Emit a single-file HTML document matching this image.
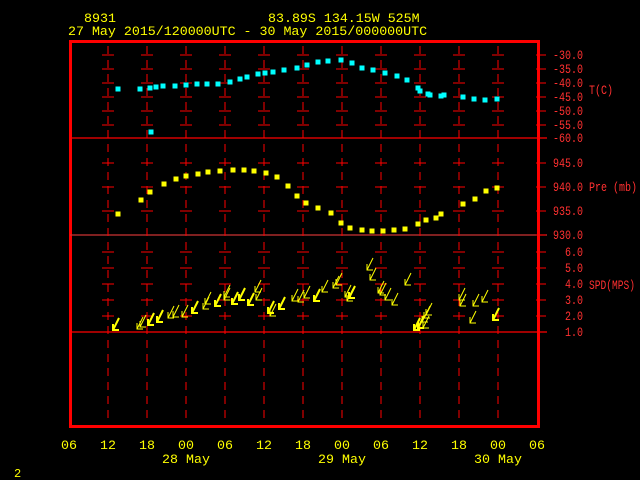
<!DOCTYPE html>
<html><head><meta charset="utf-8"><style>
html,body{margin:0;padding:0;background:#000;width:640px;height:480px;overflow:hidden}
svg{display:block}
text{font-family:"Liberation Mono","DejaVu Sans Mono",monospace;font-size:13.3px}
.s{font-size:12.5px}
</style></head><body>
<svg width="640" height="480" viewBox="0 0 640 480">
<g fill="#ffff00">
<text x="84" y="22">8931</text>
<text x="268" y="22">83.89S  134.15W   525M</text>
<text x="68" y="35">27 May 2015/120000UTC - 30 May 2015/000000UTC</text>
</g>
<rect x="70.5" y="41.5" width="468" height="385" fill="none" stroke="#ff0000" stroke-width="3"/>
<g stroke="#ff0000" stroke-width="1.2">
<line x1="70" y1="138" x2="547" y2="138"/>
<line x1="70" y1="235" x2="547" y2="235" stroke="#c33" />
<line x1="70" y1="332" x2="547" y2="332"/>
</g>
<g id="grid" stroke="#ff0000" stroke-width="1" stroke-dasharray="8,6"></g>
<g id="ticks" stroke="#ff0000" stroke-width="1"></g>
<g fill="#ff3030" text-anchor="end" id="lab"></g>
<g fill="#ff3030">
<text class="s" x="589" y="94" textLength="24" lengthAdjust="spacingAndGlyphs">T(C)</text>
<text class="s" x="589" y="191" textLength="48" lengthAdjust="spacingAndGlyphs">Pre (mb)</text>
<text class="s" x="589" y="289" textLength="46" lengthAdjust="spacingAndGlyphs">SPD(MPS)</text>
</g>
<g fill="#ffff00" text-anchor="middle" id="xl">
<text x="186" y="463">28 May</text>
<text x="342" y="463">29 May</text>
<text x="498" y="463">30 May</text>
</g>
<text x="14" y="477" fill="#ffff00" style="font-size:12px">2</text>
<g id="cy" fill="#00ffff"></g>
<g id="ye" fill="#ffff00"></g>
<g id="wd" stroke="#ffff00" stroke-width="1" fill="none"></g>
</svg>
<script>
var NS="http://www.w3.org/2000/svg";
function el(p,t,a,tx){var e=document.createElementNS(NS,t);for(var k in a)e.setAttribute(k,a[k]);if(tx)e.textContent=tx;document.getElementById(p).appendChild(e);}
var gx=[108,147,186,225,264,303,342,381,420,459,498];
var ty=[55,69,83,97,111,125,163,187,211,252,268,284,300,316];
gx.forEach(function(x){el('grid','line',{x1:x,y1:46,x2:x,y2:420});ty.forEach(function(y){el('ticks','line',{x1:x-6,y1:y,x2:x+6,y2:y});});});
var labs=[[55,"-30.0"],[69,"-35.0"],[83,"-40.0"],[97,"-45.0"],[111,"-50.0"],[125,"-55.0"],[138,"-60.0"],[163,"945.0"],[187,"940.0"],[211,"935.0"],[235,"930.0"],[252,"6.0"],[268,"5.0"],[284,"4.0"],[300,"3.0"],[316,"2.0"],[332,"1.0"]];
labs.forEach(function(l){el('lab','text',{x:583,y:l[0]+4,'class':'s',textLength:l[1].length*6,lengthAdjust:'spacingAndGlyphs'},l[1]);el('ticks','line',{x1:536,y1:l[0],x2:546,y2:l[0]});});
var xl=["06","12","18","00","06","12","18","00","06","12","18","00","06"];
xl.forEach(function(t,i){el('xl','text',{x:69+i*39,y:449},t);});
var c=[[118,89],[140,89],[150,88],[156,87],[163,86],[175,86],[186,85],[197,84],[207,84],[218,84],[230,82],[240,79],[247,77],[258,74],[265,73],[273,72],[284,70],[297,68],[307,65],[318,62],[328,61],[341,60],[352,63],[362,68],[373,70],[385,73],[397,76],[407,80],[418,88],[420,91],[428,94],[430,95],[441,96],[444,95],[463,97],[474,99],[485,100],[497,99],[151,132]];
c.forEach(function(p){el('cy','rect',{x:p[0]-2.5,y:p[1]-2.5,width:5,height:5});});
var y=[[118,214],[141,200],[150,192],[164,184],[176,179],[186,176],[198,174],[208,172],[220,171],[233,170],[244,170],[254,171],[266,173],[277,177],[288,186],[297,196],[306,203],[318,208],[331,213],[341,223],[350,228],[362,230],[372,231],[383,231],[394,230],[405,229],[418,224],[426,220],[436,218],[441,214],[463,204],[475,199],[486,191],[497,188]];
y.forEach(function(p){el('ye','rect',{x:p[0]-2.5,y:p[1]-2.5,width:5,height:5});});
var w=[[113,330,2],[137,329,1],[140,327,1],[148,325,2],[157,322,2],[168,318,1],[173,317,1],[182,317,1],[192,313,2],[203,309,1],[205,304,1],[215,306,2],[224,300,1],[224,297,1],[232,304,2],[239,300,2],[248,305,2],[255,292,1],[256,300,1],[268,313,2],[270,316,1],[279,309,2],[292,301,1],[298,302,1],[304,298,1],[314,301,2],[322,292,1],[333,288,1],[336,285,1],[345,297,1],[347,301,1],[349,298,2],[367,270,1],[370,280,1],[378,293,1],[380,295,1],[385,300,1],[392,305,1],[405,285,1],[414,330,2],[418,328,2],[422,322,1],[424,318,1],[426,315,1],[423,328,1],[459,300,1],[460,306,1],[470,323,1],[473,306,1],[482,302,1],[493,320,2]];
w.forEach(function(a){var x=a[0],yy=a[1],s=a[2];
el('wd','path',{d:'M'+(x+6)+' '+(yy-12)+'L'+x+' '+yy+'M'+x+' '+(yy-6)+'L'+x+' '+yy+'L'+(x+6)+' '+yy,'stroke-width':s});});
</script>
</body></html>
